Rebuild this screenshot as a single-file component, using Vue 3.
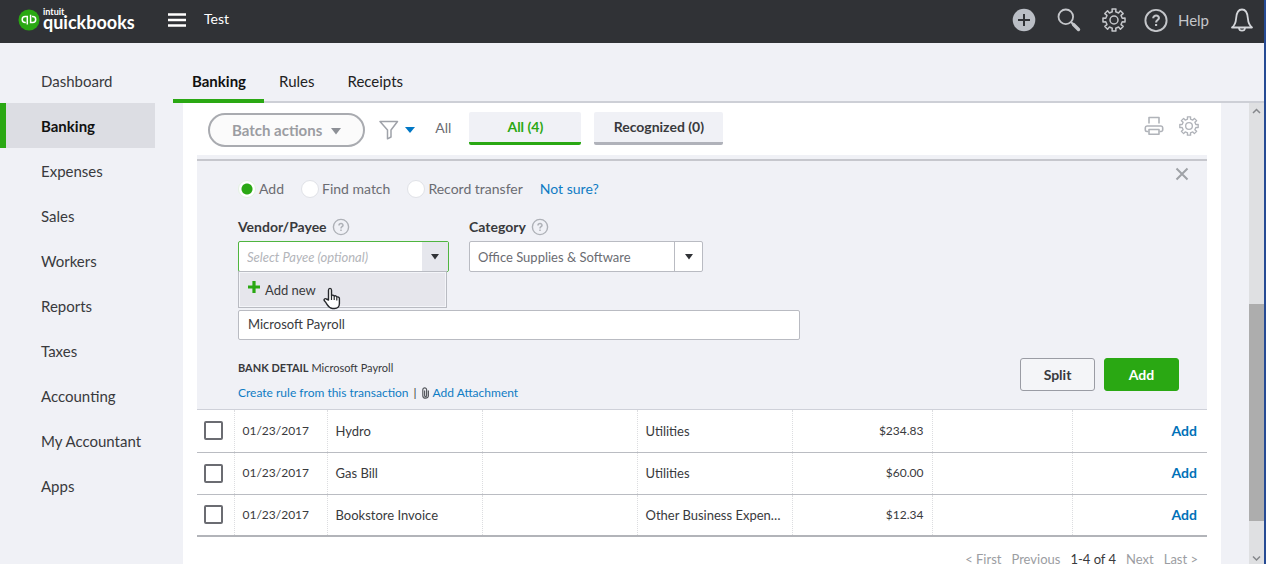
<script setup>
import { ref } from 'vue'

const navItems = ['Dashboard', 'Banking', 'Expenses', 'Sales', 'Workers', 'Reports', 'Taxes', 'Accounting', 'My Accountant', 'Apps']
const activeNav = ref('Banking')
const tabs = ['Banking', 'Rules', 'Receipts']
const activeTab = ref('Banking')
const modes = ['Add', 'Find match', 'Record transfer']
const mode = ref('Add')
const payee = ref('')
const category = ref('Office Supplies & Software')
const memo = ref('Microsoft Payroll')
const rows = [
  { date: '01/23/2017', name: 'Hydro', category: 'Utilities', amount: '$234.83' },
  { date: '01/23/2017', name: 'Gas Bill', category: 'Utilities', amount: '$60.00' },
  { date: '01/23/2017', name: 'Bookstore Invoice', category: 'Other Business Expenses', amount: '$12.34' },
]

// Outline of an eight-toothed gear centred on (12, 12)
const gearPath = (() => {
  const pt = (r, deg) => {
    const a = (deg * Math.PI) / 180
    return `${(12 + r * Math.cos(a)).toFixed(2)} ${(12 + r * Math.sin(a)).toFixed(2)}`
  }
  const parts = []
  for (let i = 0; i < 8; i++) {
    const c = i * 45
    parts.push(pt(8.4, c - 12), pt(11.2, c - 10), pt(11.2, c + 10), pt(8.4, c + 12))
  }
  return `M${parts.join('L')}Z`
})()
</script>

<template>
  <div class="app">
    <header class="topbar">
      <a class="brand" href="#" aria-label="Intuit QuickBooks">
        <svg class="brand-mark" viewBox="0 0 22 22" aria-hidden="true">
          <circle cx="11" cy="11" r="10.5" fill="#2aa813" />
          <g fill="none" stroke="#fff" stroke-width="1.5">
            <path d="M9.300 15.500V7.500H7.200a3 3 0 0 0 0 6h.6" />
            <path d="M12.600 5.800v7.700h2.100a3 3 0 0 0 0-6H14" />
          </g>
        </svg>
        <span class="brand-text">
          <span class="brand-small">intuit</span>
          <span class="brand-name">quickbooks</span>
        </span>
      </a>
      <button class="icon-btn burger" aria-label="Menu">
        <svg width="20" height="14" viewBox="0 0 20 14"><path d="M1 1.5h18M1 7h18M1 12.5h18" stroke="#fff" stroke-width="2.4" /></svg>
      </button>
      <span class="company">Test</span>
      <div class="tools">
        <button class="icon-btn" aria-label="Create">
          <svg width="24" height="24" viewBox="0 0 24 24"><circle cx="12" cy="12" r="11.3" fill="#babec5" /><path d="M12 6v12M6 12h12" stroke="#303236" stroke-width="2" /></svg>
        </button>
        <button class="icon-btn" aria-label="Search">
          <svg width="24" height="24" viewBox="0 0 24 24" fill="none" stroke="#c4c6ca"><circle cx="8.800" cy="8.800" r="7.300" stroke-width="1.800" /><path d="M14 14l3 3" stroke-width="2" /><path d="M16.500 16.500l5 5" stroke-width="3.400" stroke-linecap="round" /></svg>
        </button>
        <button class="icon-btn" aria-label="Settings">
          <svg width="24" height="24" viewBox="0 0 24 24" fill="none" stroke="#c4c6ca" stroke-width="1.5" stroke-linejoin="round"><path :d="gearPath" /><circle cx="12" cy="12" r="4" /></svg>
        </button>
        <button class="icon-btn help">
          <svg width="24" height="24" viewBox="0 0 24 24" fill="none" stroke="#c4c6ca"><circle cx="12" cy="12.500" r="10.600" stroke-width="1.900" /><path d="M9.200 10.300c0-3.800 6-3.600 5.700-.1-.2 1.900-2.800 1.900-2.800 4.300M12.100 15.900v2" stroke-width="2.100" /></svg>
          <span>Help</span>
        </button>
        <button class="icon-btn" aria-label="Notifications">
          <svg width="24" height="24" viewBox="0 0 24 24" fill="none" stroke="#d4d6da" stroke-width="1.800" stroke-linejoin="round"><path d="M2 19.500c3-2.300 3.800-5 4.100-9C6.500 4.500 8 1.500 12 1.500s5.500 3 5.900 9c.3 4 1.100 6.700 4.100 9z" /><path d="M9 20c.3 3.600 5.700 3.600 6 0" /></svg>
        </button>
      </div>
    </header>

    <div class="body">
      <nav class="sidebar" aria-label="Main">
        <a v-for="item in navItems" :key="item" href="#" class="nav-item" :class="{ active: item === activeNav }" @click.prevent="activeNav = item">{{ item }}</a>
      </nav>

      <main class="main">
        <nav class="tabs" aria-label="Banking sections">
          <a v-for="t in tabs" :key="t" href="#" class="tab" :class="{ active: t === activeTab }" @click.prevent="activeTab = t">{{ t }}</a>
        </nav>

        <div class="viewport">
          <section class="panel">
            <div class="toolbar">
              <button class="batch">Batch actions
                <svg width="10" height="9" viewBox="0 0 10 9"><path d="M0 2h10L5 8.500z" fill="#8d9096" /></svg>
              </button>
              <button class="icon-btn filter" aria-label="Filter">
                <svg width="20" height="20" viewBox="0 0 20 20" fill="none" stroke="#9fa2a9" stroke-width="1.500" stroke-linejoin="round"><path d="M1 1.500h17.500L12 10v7l-3.500 1.800V10z" /></svg>
                <svg width="10" height="6" viewBox="0 0 10 6"><path d="M0 0h10L5 6z" fill="#0077c5" /></svg>
              </button>
              <span class="filter-label">All</span>
              <button class="pill selected">All (4)</button>
              <button class="pill wide">Recognized (0)</button>
              <div class="toolbar-right">
                <button class="icon-btn" aria-label="Print">
                  <svg width="20" height="20" viewBox="0 0 20 20" fill="none" stroke="#b0b3b9" stroke-width="1.600" stroke-linejoin="round"><path d="M5 7.500V1.500h10v6" /><path d="M4.500 15.500H3a1.700 1.700 0 0 1-1.700-1.700v-2A1.800 1.800 0 0 1 3 10h14a1.800 1.800 0 0 1 1.700 1.800v2a1.700 1.700 0 0 1-1.700 1.700h-1.500" /><path d="M5 13.500h10v4.700H5z" /></svg>
                </button>
                <button class="icon-btn" aria-label="Table settings">
                  <svg width="20" height="20" viewBox="0 0 24 24" fill="none" stroke="#b0b3b9" stroke-width="1.600" stroke-linejoin="round"><path :d="gearPath" /><circle cx="12" cy="12" r="4" /></svg>
                </button>
              </div>
            </div>

            <form class="editor" @submit.prevent>
              <button type="button" class="icon-btn close" aria-label="Close">
                <svg width="14" height="14" viewBox="0 0 14 14"><path d="M1.500 1.500l11 11M12.500 1.500l-11 11" stroke="#9fa2a7" stroke-width="2" /></svg>
              </button>
              <div class="modes">
                <label v-for="m in modes" :key="m" class="mode"><input v-model="mode" type="radio" name="mode" :value="m" />{{ m }}</label>
                <a href="#" class="link">Not sure?</a>
              </div>

              <div class="fields">
                <div class="field payee">
                  <div class="field-head">
                    <label for="payee">Vendor/Payee</label>
                    <svg class="hint" viewBox="0 0 18 18" fill="none" stroke="#aeb1b7"><circle cx="9" cy="9" r="7.600" stroke-width="1.400" /><path d="M7 7.500c0-2.700 4.200-2.600 4-.1-.1 1.400-2 1.300-2 3M9 11.600v1.500" stroke-width="1.500" /></svg>
                  </div>
                  <div class="combo focused">
                    <input id="payee" v-model="payee" type="text" placeholder="Select Payee (optional)" />
                    <button type="button" class="combo-arrow" aria-label="Show payees">
                      <svg width="8" height="6" viewBox="0 0 8 6"><path d="M0 0h8L4 5.500z" fill="#303236" /></svg>
                    </button>
                  </div>
                  <div class="menu">
                    <button type="button" class="menu-item">
                      <svg width="12" height="12" viewBox="0 0 12 12"><path d="M6 0v12M0 6h12" stroke="#2aa813" stroke-width="3.200" /></svg>
                      <span>Add new</span>
                    </button>
                    <svg class="pointer" width="19" height="24" viewBox="0 0 19 24"><path d="M5.500 13V3.200c0-2.400 3-2.400 3 0v5.600c.6-1 2.400-.8 2.700.4.800-.8 2.400-.4 2.600.9.900-.6 2.600 0 2.600 1.500v4.900c0 2.500-1.600 5-4.900 5H9.500C6.500 21 5 19 4 17.300c-.8-1.300-1.600-2.400-2.600-3.500-1-1.500.6-2.800 2-1.800z" fill="#fff" stroke="#26282c" stroke-width="1.400" stroke-linejoin="round" /><path d="M8.500 9v4M11.200 9.500V13M13.800 10.500V13.500" stroke="#26282c" stroke-width="1.200" /></svg>
                  </div>
                </div>
                <div class="field category">
                  <div class="field-head">
                    <label for="category">Category</label>
                    <svg class="hint" viewBox="0 0 18 18" fill="none" stroke="#aeb1b7"><circle cx="9" cy="9" r="7.600" stroke-width="1.400" /><path d="M7 7.500c0-2.700 4.200-2.600 4-.1-.1 1.400-2 1.300-2 3M9 11.600v1.500" stroke-width="1.500" /></svg>
                  </div>
                  <div class="combo">
                    <select id="category" v-model="category"><option>Office Supplies &amp; Software</option></select>
                    <span class="combo-arrow">
                      <svg width="8" height="6" viewBox="0 0 8 6"><path d="M0 0h8L4 5.500z" fill="#303236" /></svg>
                    </span>
                  </div>
                </div>
              </div>

              <input v-model="memo" class="memo" type="text" aria-label="Memo" />

              <div class="editor-foot">
                <div class="details">
                  <p class="detail"><strong>BANK DETAIL</strong> Microsoft Payroll</p>
                  <p class="links">
                    <a href="#" class="link">Create rule from this transaction</a>
                    <span>|</span>
                    <a href="#" class="link attach">
                      <svg width="8" height="12" viewBox="0 0 8 12" fill="none" stroke="#55585e" stroke-width="1.200"><path d="M2.600 3.500v5c0 1.400 2 1.400 2 0V2.800c0-2.600-3.800-2.600-3.800 0v5.900c0 3.300 5.600 3.300 5.600 0V3.500" /></svg>
                      Add Attachment</a>
                  </p>
                </div>
                <div class="actions">
                  <button type="button" class="btn">Split</button>
                  <button type="submit" class="btn primary">Add</button>
                </div>
              </div>
            </form>

            <table class="grid">
              <colgroup>
                <col class="c-check" /><col class="c-date" /><col class="c-text" /><col /><col class="c-text" /><col class="c-num" /><col class="c-num" /><col class="c-act" />
              </colgroup>
              <tbody>
                <tr v-for="r in rows" :key="r.name">
                  <td class="check"><input type="checkbox" :aria-label="'Select ' + r.name" /></td>
                  <td class="date">{{ r.date }}</td>
                  <td>{{ r.name }}</td>
                  <td></td>
                  <td class="clip">{{ r.category }}</td>
                  <td class="num">{{ r.amount }}</td>
                  <td></td>
                  <td class="act"><a href="#" class="link">Add</a></td>
                </tr>
              </tbody>
            </table>

            <div class="pager">
              <a href="#">&lt; First</a><a href="#">Previous</a><span>1-4 of 4</span><a href="#">Next</a><a href="#">Last &gt;</a>
            </div>
          </section>

          <div class="scrollbar" aria-hidden="true">
            <svg viewBox="0 0 15 17"><path d="M4 10l3.500-3.500L11 10" fill="none" stroke="#85878b" stroke-width="1.500" /></svg>
            <div class="track"><div class="thumb"></div></div>
            <svg viewBox="0 0 15 17"><path d="M4 9.500L7.500 13 11 9.500" fill="none" stroke="#85878b" stroke-width="1.500" /></svg>
          </div>
        </div>
      </main>
    </div>
  </div>
</template>

<style>
body {
  margin: 0;
  overflow: hidden;
}
</style>

<style scoped>
* {
  box-sizing: border-box;
}
.app {
  display: flex;
  flex-direction: column;
  height: 100vh;
  overflow: hidden;
  background: #f0f1f6;
  border-right: 2px solid #264b94;
  color: #393a3d;
  font: 14px/20px Lato, "Open Sans", sans-serif;
}
a {
  color: inherit;
  text-decoration: none;
}
button,
input,
select {
  margin: 0;
  font: inherit;
  color: inherit;
}
svg {
  display: block;
  flex: none;
}
.icon-btn {
  display: flex;
  align-items: center;
  padding: 0;
  border: 0;
  background: none;
}
.link {
  color: #0f7cc4;
}

.topbar {
  display: flex;
  flex: none;
  align-items: center;
  height: 43px;
  padding: 0 10px 3px 18px;
  background: #303236;
  color: #fff;
}
.brand {
  display: flex;
  align-items: center;
  gap: 3px;
  width: 149px;
}
.brand-mark {
  width: 22px;
  height: 22px;
}
.brand-text {
  display: flex;
  flex-direction: column;
  font-weight: 700;
}
.brand-small {
  font-size: 9px;
  line-height: 8px;
}
.brand-name {
  font-size: 18px;
  line-height: 12px;
  padding-bottom: 4px;
}
.company {
  margin-left: 17px;
  padding-bottom: 2px;
}
.tools {
  display: flex;
  align-items: center;
  gap: 21px;
  margin-left: auto;
}
.help {
  gap: 10px;
  color: #c4c6ca;
  font-size: 15px;
}
.tools .help {
  margin-left: -3px;
}

.body {
  display: flex;
  flex: 1;
  min-height: 0;
}
.sidebar {
  display: flex;
  flex: none;
  flex-direction: column;
  width: 155px;
  margin-right: 18px;
  padding-top: 15px;
  font-size: 15px;
}
.nav-item {
  height: 45px;
  padding-left: 35px;
  border-left: 6px solid transparent;
  line-height: 46px;
}
.nav-item.active {
  border-color: #2aa813;
  background: #dcdde3;
  color: #111;
  font-weight: 700;
}
.main {
  display: flex;
  flex: 1;
  flex-direction: column;
  min-width: 0;
}
.tabs {
  display: flex;
  flex: none;
  height: 60px;
  border-bottom: 2px solid #cdcfd6;
  font-size: 15px;
}
.tab {
  height: 60px;
  padding: 0 18px 0 15px;
  line-height: 76px;
  color: #222;
}
.tab:first-child {
  padding-left: 19px;
}
.tab.active {
  border-bottom: 4px solid #2aa813;
  color: #111;
  font-weight: 700;
}
.viewport {
  display: flex;
  flex: 1;
  min-height: 0;
  overflow: hidden;
}
.panel {
  flex: 1;
  align-self: flex-start;
  min-width: 0;
  margin: 0 28px 0 10px;
  padding: 0 14px;
  background: #fff;
}
.toolbar {
  display: flex;
  align-items: center;
  height: 52px;
  padding: 0 8px 2px 11px;
}
.batch {
  display: flex;
  align-items: center;
  gap: 9px;
  height: 34px;
  margin-top: 4px;
  padding: 0 22px;
  border: 2px solid #a9abb0;
  border-radius: 17px;
  background: #fbfbfb;
  color: #9b9da2;
  font-weight: 700;
  font-size: 15px;
}
.filter {
  gap: 6px;
  margin: 4px 20px 0 14px;
}
.filter-label {
  margin-right: 18px;
  color: #6b6c72;
}
.pill {
  width: 112px;
  height: 33px;
  margin-right: 13px;
  padding: 1px 0 0;
  border: 0;
  border-bottom: 3px solid #b0b2ba;
  border-radius: 2px;
  background: #f0f1f6;
  font-weight: 700;
}
.pill.wide {
  width: 129px;
}
.pill.selected {
  border-color: #2aa813;
  color: #2aa813;
}
.toolbar-right {
  display: flex;
  gap: 15px;
  margin: 0 0 4px auto;
}
.editor {
  position: relative;
  padding: 18px 28px 0 41px;
  height: 255px;
  background: #f0f1f6;
  border-bottom: 1px solid #cfd1d9;
}
.editor::before {
  content: "";
  position: absolute;
  inset: 4px 0 auto;
  height: 2px;
  background: #c6c7cd;
}
.close {
  position: absolute;
  top: 12px;
  right: 18px;
}
.modes {
  display: flex;
  align-items: center;
  gap: 17px;
  height: 32px;
  color: #6b6c72;
}
.mode {
  display: flex;
  align-items: center;
  gap: 3px;
}
.mode input {
  width: 18px;
  height: 18px;
  appearance: none;
  border: 1px solid #e0e2e7;
  border-radius: 50%;
  background: #fff;
}
.mode input:checked {
  border-color: #e3f2e1;
  background: radial-gradient(circle, #2aa813 5px, #fff 6px);
}
.fields {
  display: flex;
  gap: 20px;
  padding-top: 11px;
}
.field {
  position: relative;
  width: 211px;
}
.field.category {
  width: 234px;
}
.field-head {
  display: flex;
  align-items: center;
  gap: 5px;
  height: 22px;
  margin-bottom: 3px;
  font-weight: 700;
}
.hint {
  width: 18px;
  height: 18px;
}
.combo {
  display: flex;
  position: relative;
  height: 31px;
  border: 1px solid #b9bbc2;
  border-radius: 2px;
  background: #fff;
  font-size: 13px;
}
.combo input,
.combo select {
  flex: 1;
  min-width: 0;
  padding: 0 8px;
  border: 0;
  outline: 0;
  appearance: none;
  background: none;
  color: #6b6c72;
}
.combo input::placeholder {
  color: #b3b5ba;
  font-style: italic;
  opacity: 1;
}
.combo-arrow {
  display: flex;
  flex: none;
  align-items: center;
  justify-content: center;
  width: 28px;
  padding: 0;
  border: 0;
  border-left: 1px solid #b9bbc2;
  background: none;
  pointer-events: none;
}
.focused {
  border-color: #4fb53f;
}
.focused .combo-arrow {
  width: 26px;
  border-left: 0;
  background: #e6e7ed;
  pointer-events: auto;
}
.menu {
  position: absolute;
  z-index: 2;
  top: 55px;
  left: 0;
  width: 209px;
  padding: 1px;
  border: 1px solid #b9bbc2;
  background: #f4f5f9;
}
.menu-item {
  display: flex;
  gap: 5px;
  width: 100%;
  height: 33px;
  padding: 8px 8px 0;
  border: 0;
  background: #e6e6ec;
  font-size: 13px;
  line-height: 18px;
}
.pointer {
  position: absolute;
  top: 15px;
  left: 84px;
}
.memo {
  display: block;
  width: 562px;
  max-width: 100%;
  height: 30px;
  margin-top: 38px;
  padding: 0 9px 2px;
  border: 1px solid #b9bbc2;
  border-radius: 2px;
  background: #fff;
  font-size: 13px;
}
.editor-foot {
  display: flex;
  justify-content: space-between;
  padding-top: 18px;
}
.detail {
  margin: 0;
  height: 25px;
  font-size: 11px;
}
.links {
  display: flex;
  gap: 5px;
  margin: 0;
  font-size: 12px;
}
.attach {
  display: flex;
  align-items: center;
  gap: 3px;
  height: 20px;
}
.actions {
  display: flex;
  gap: 9px;
}
.btn {
  width: 75px;
  height: 33px;
  padding: 0;
  border: 1px solid #9a9ca4;
  border-radius: 3px;
  background: #f4f5f8;
  font-weight: 700;
}
.primary {
  border-color: #2aa813;
  background: #2aa813;
  color: #fff;
}
.grid {
  width: 100%;
  border-collapse: collapse;
  table-layout: fixed;
  font-size: 13px;
}
.c-check { width: 37px; }
.c-date { width: 93px; }
.c-text { width: 155px; }
.c-num { width: 140px; }
.c-act { width: 135px; }
.grid tr {
  height: 42px;
  border-bottom: 1px solid #babcc2;
}
.grid tr:last-child {
  border-bottom: 2px solid #b2b4b9;
}
.grid td {
  padding: 0 8px;
  border-right: 1px dotted #dcdde0;
  white-space: nowrap;
}
.grid td:last-child {
  border-right: 0;
}
.grid .check {
  padding: 0 7px;
}
.check input {
  display: block;
  width: 19px;
  height: 19px;
  appearance: none;
  border: 2px solid #6b6c72;
  border-radius: 2px;
  background: #fff;
}
.clip {
  overflow: hidden;
  text-overflow: ellipsis;
}
.grid .date,
.grid .num {
  font-size: 12px;
}
.num {
  text-align: right;
}
.grid .act {
  padding-right: 10px;
  text-align: right;
  font-size: 14px;
  font-weight: 700;
}
.act .link {
  color: #0071b8;
}
.pager {
  display: flex;
  justify-content: flex-end;
  gap: 10px;
  height: 60px;
  padding: 12px 9px 0;
  color: #9b9da2;
  font-size: 13px;
}
.pager span {
  color: #393a3d;
}
.scrollbar {
  display: flex;
  flex: none;
  flex-direction: column;
  width: 15px;
  background: #dfe0e2;
}
.scrollbar svg {
  width: 15px;
  height: 17px;
}
.track {
  display: flex;
  flex: 1;
  flex-direction: column;
  justify-content: flex-end;
  padding-bottom: 26px;
}
.thumb {
  height: 54%;
  background: #adadad;
}
</style>
